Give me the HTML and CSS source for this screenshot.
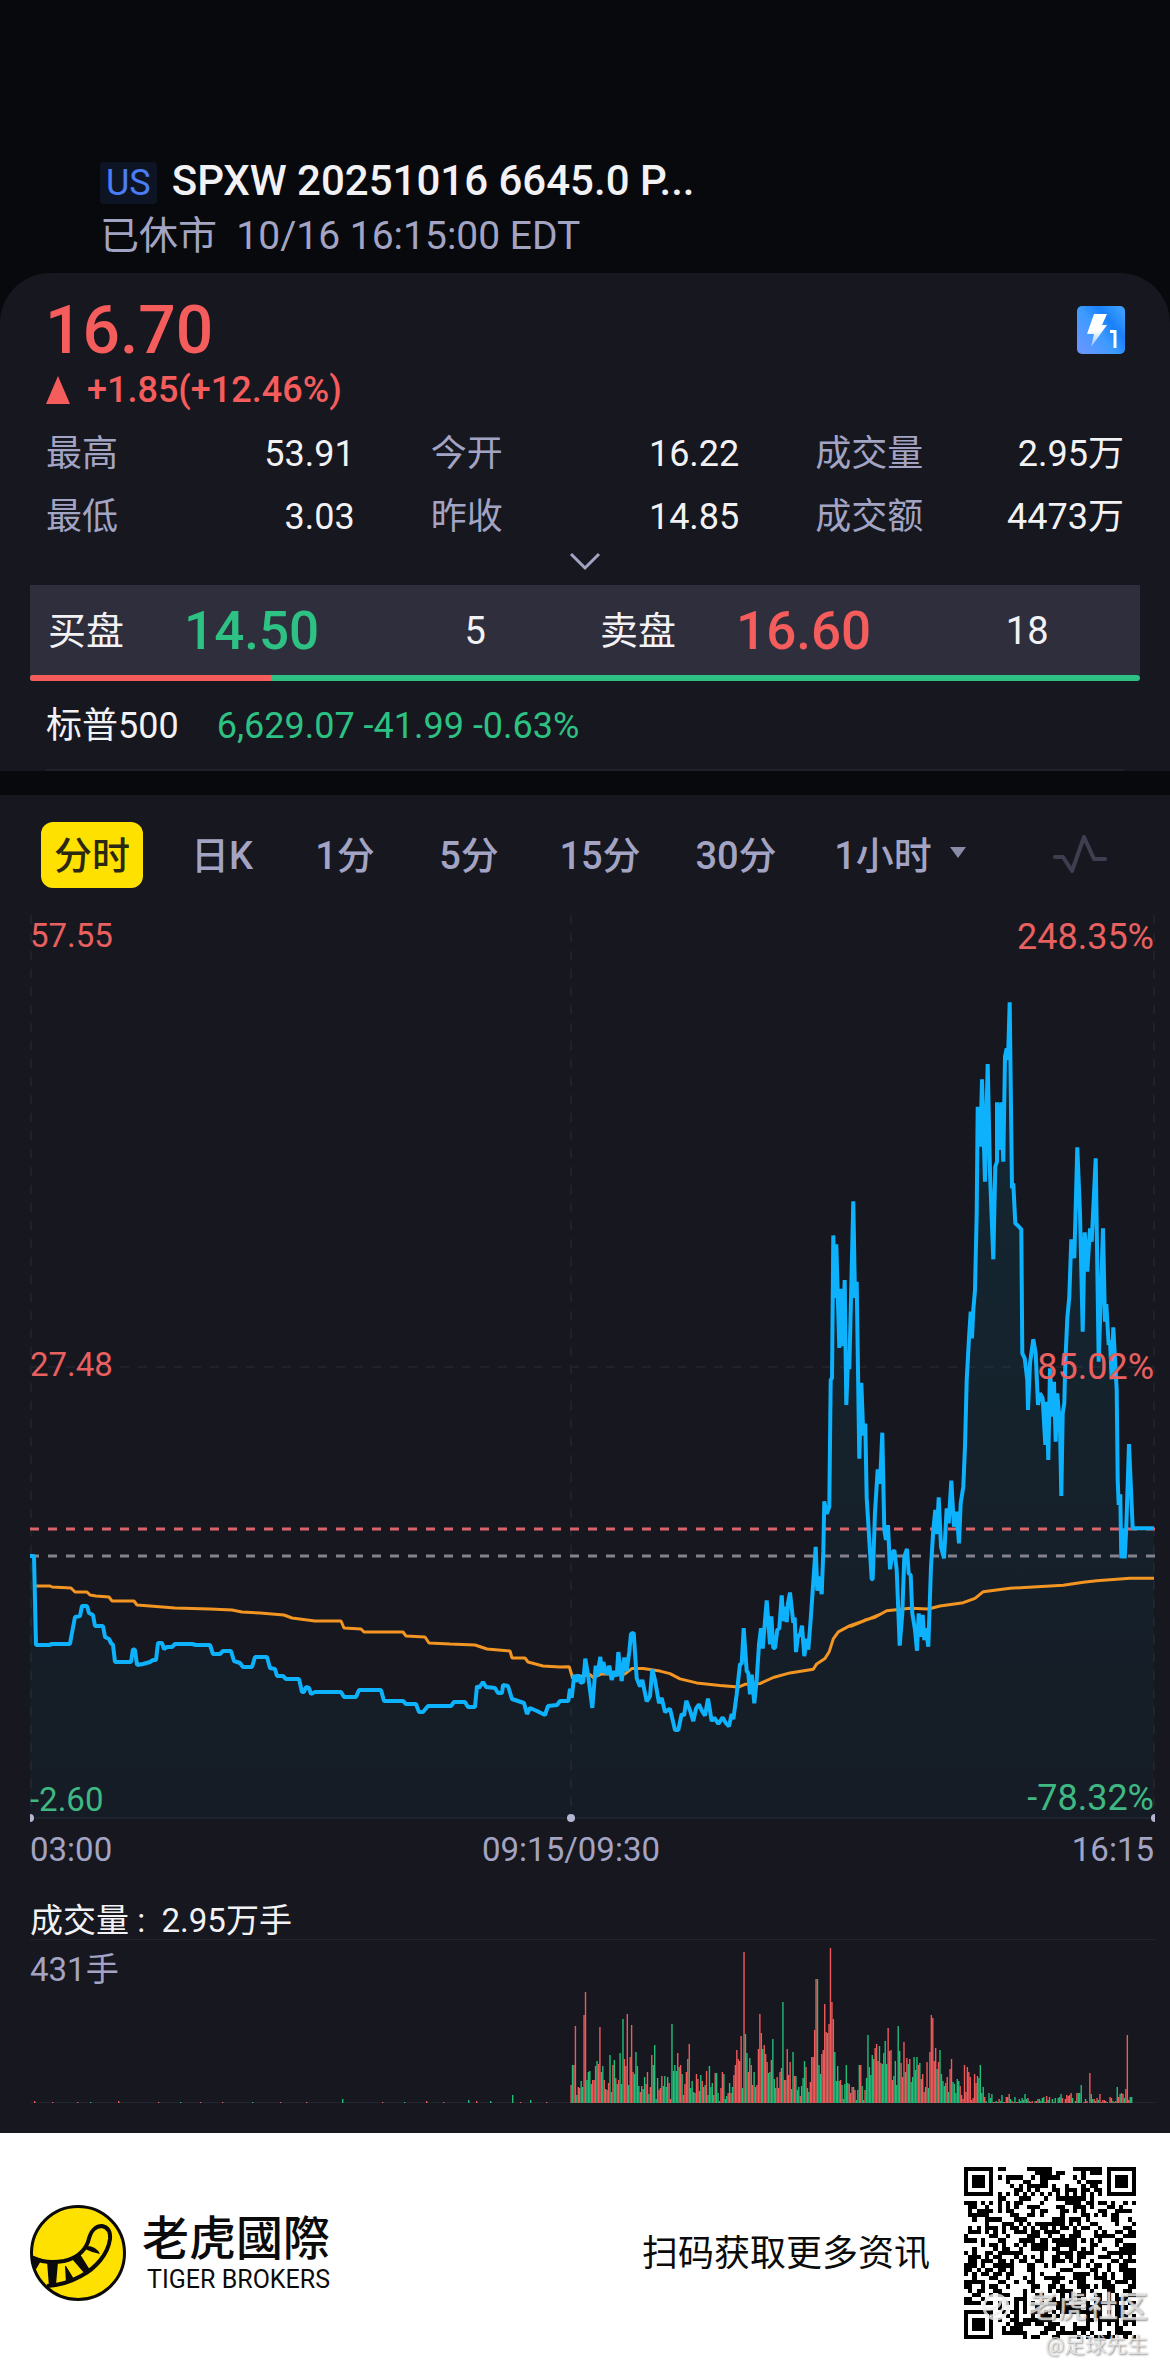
FILE: index.html
```html
<!DOCTYPE html>
<html lang="zh-CN">

<head>
    <meta charset="UTF-8">
    <meta name="viewport" content="width=device-width, initial-scale=1">
    <title>SPXW 20251016 6645.0</title>
    <link rel="stylesheet" href="styles.css">
</head>

<body>
    <header class="header">
        <div class="title-row">
            <span class="market">US</span>
            <h1>SPXW 20251016 6645.0 P...</h1>
        </div>
        <p class="status">已休市&nbsp; 10/16 16:15:00 EDT</p>
    </header>

    <main>
        <section class="quote">
            <div class="price-row">
                <strong class="price">16.70</strong>
                <svg class="level-icon" viewBox="0 0 48 48" role="img" aria-label="L1">
                    <defs>
                        <linearGradient id="level-bg" x1="0" y1="1" x2="1" y2="0.2">
                            <stop offset="0" stop-color="#6f95ff" />
                            <stop offset="0.5" stop-color="#3d9bff" />
                            <stop offset="0.75" stop-color="#1a80fa" />
                            <stop offset="1" stop-color="#3a9dff" />
                        </linearGradient>
                        <linearGradient id="bolt" x1="0" y1="0" x2="0" y2="1">
                            <stop offset="0.5" stop-color="#fff" />
                            <stop offset="1" stop-color="#fff" stop-opacity="0.4" />
                        </linearGradient>
                    </defs>
                    <rect width="48" height="48" rx="5" fill="url(#level-bg)" />
                    <path d="M17 8H30L25 19H30L14 41L17 28H10Z" fill="url(#bolt)" />
                    <path d="M33 25.500H38V42" fill="none" stroke="#fff" stroke-width="3" />
                </svg>
            </div>
            <p class="change"><span class="up-arrow"></span>+1.85(+12.46%)</p>

            <dl class="stats">
                <div><dt>最高</dt><dd>53.91</dd></div>
                <div><dt>今开</dt><dd>16.22</dd></div>
                <div><dt>成交量</dt><dd>2.95万</dd></div>
                <div><dt>最低</dt><dd>3.03</dd></div>
                <div><dt>昨收</dt><dd>14.85</dd></div>
                <div><dt>成交额</dt><dd>4473万</dd></div>
            </dl>
            <button class="expand" type="button" aria-label="展开">
                <svg viewBox="0 0 32 24" width="32" height="24">
                    <path d="M2 5L16 19L30 5" fill="none" stroke="#a3a4c3" stroke-width="3" />
                </svg>
            </button>

            <div class="book">
                <div class="side">
                    <span>买盘</span><strong class="green">14.50</strong><span class="size">5</span>
                </div>
                <div class="side">
                    <span>卖盘</span><strong class="red">16.60</strong><span class="size">18</span>
                </div>
            </div>
            <div class="ratio"><span class="ratio-bid"></span></div>

            <p class="index-row"><span>标普500</span><span class="green">6,629.07 -41.99 -0.63%</span></p>
        </section>

        <section class="chart">
            <nav class="tabs">
                <button type="button" class="active">分时</button>
                <button type="button">日K</button>
                <button type="button">1分</button>
                <button type="button">5分</button>
                <button type="button">15分</button>
                <button type="button">30分</button>
                <button type="button">1小时<span class="caret"></span></button>
                <button type="button" aria-label="指标">
                    <svg viewBox="0 0 54 40" width="54" height="40">
                        <path d="M2 24H10L19 38L31 4L41 26H52" fill="none" stroke="#3e3e50" stroke-width="4" stroke-linejoin="round" stroke-linecap="round" />
                    </svg>
                </button>
            </nav>

            <svg class="price-chart" viewBox="30 905 1125 975">
                <defs>
                    <linearGradient id="area" gradientUnits="userSpaceOnUse" x1="0" y1="1000" x2="0" y2="1818">
                        <stop offset="0" stop-color="#00b4dc" stop-opacity="0.11" />
                        <stop offset="1" stop-color="#00b4dc" stop-opacity="0.03" />
                    </linearGradient>
                </defs>
                <g class="grid">
                    <path d="M31 915V1818M571 915V1818M1154 915V1818M30 1367H1155" stroke-dasharray="9 9" />
                    <path d="M30 1818H1155" />
                </g>
                <path id="price-area" fill="url(#area)" />
                <path class="last-line" d="M30 1529H1155" />
                <path class="prev-line" d="M30 1556H1155" />
                <path id="avg-line" />
                <path id="price-line" />
                <g class="dots">
                    <circle cx="30" cy="1818" r="4" />
                    <circle cx="571" cy="1818" r="4" />
                    <circle cx="1155" cy="1818" r="4" />
                </g>
                <g class="axis">
                    <text class="up" x="30" y="947">57.55</text>
                    <text class="up" x="30" y="1376">27.48</text>
                    <text class="down" x="30" y="1811">-2.60</text>
                    <text class="up pct" x="1154" y="949">248.35%</text>
                    <text class="up pct" x="1154" y="1379">85.02%</text>
                    <text class="down pct" x="1154" y="1810">-78.32%</text>
                    <text x="30" y="1861">03:00</text>
                    <text class="mid" x="571" y="1861">09:15/09:30</text>
                    <text class="end" x="1154" y="1861">16:15</text>
                </g>
            </svg>

            <p class="volume-title">成交量 :&nbsp; 2.95万手</p>
            <svg class="volume-chart" viewBox="0 0 1125 164">
                <path class="volume-rule" d="M0 0.500H1125M0 163.500H1125" />
                <g id="volume-bars"></g>
                <text x="0" y="42">431手</text>
            </svg>
        </section>
    </main>

    <footer class="footer">
        <svg class="logo" viewBox="0 0 96 96" role="img" aria-label="Tiger Brokers">
            <circle cx="48" cy="48" r="46.500" fill="#ffe100" stroke="#0b0b0b" stroke-width="3" />
            <path d="M3 53Q16 59 34 56Q52 52 58 37C61 24 66 21 72 21Q81 23 80 34C78 49 66 63 51 71Q35 80 17 81" fill="none" stroke="#0b0b0b" stroke-width="4" />
            <path d="M1 50L12 54L5 66ZM17 56L28 57L26 80L19 82ZM35 61L36 61L44 74L36 78ZM42 54L50 49L60 65L55 69ZM55 44L57 41Q66 41 70 49Q63 48 55 44Z" fill="#0b0b0b" />
        </svg>
        <div class="brand">
            <b>老虎國際</b>
            <span>TIGER BROKERS</span>
        </div>
        <p class="scan">扫码获取更多资讯</p>
        <div class="qr">
            <svg viewBox="0 0 41 41" shape-rendering="crispEdges" role="img" aria-label="二维码">
                <path id="qr-modules" />
            </svg>
            <div class="watermark">
                <p class="community"><svg viewBox="0 0 28 28" width="28" height="28">
                        <circle cx="14" cy="14" r="12" fill="none" stroke="currentColor" stroke-width="3" />
                        <path d="M3 16Q16 18 19 8Q23 6 23 12Q19 22 8 23" fill="none" stroke="currentColor" stroke-width="3" />
                    </svg>老虎社区</p>
                <p>@足球先生</p>
            </div>
        </div>
    </footer>

    <script src="chart.js"></script>
</body>

</html>
```
FILE: styles.css
```css
* {
    box-sizing: border-box;
}

body {
    margin: 0;
    background-color: #08090c;
    color: #f2f2f5;
    font-family: Roboto, "Noto Sans CJK SC", sans-serif;
    font-size: 36px;
}

h1, p, dl, dd {
    margin: 0;
}

button {
    padding: 0;
    border: 0;
    background: none;
    color: inherit;
    font: inherit;
}

.green {
    color: #2dc183;
}

.red {
    color: #f55c5c;
}

/* header */
.header {
    padding: 150px 46px 11px 100px;
}

.title-row {
    display: flex;
    align-items: center;
    gap: 15px;
    height: 60px;
}

.title-row h1 {
    font-size: 42px;
    font-weight: 500;
    white-space: nowrap;
}

.market {
    padding: 0 6px;
    margin-top: 6px;
    border-radius: 4px;
    background-color: #0d1525;
    color: #4b7df5;
    line-height: 42px;
}

.status {
    color: #a3a4c3;
    font-size: 39px;
    line-height: 52px;
}

/* quote */
.quote {
    padding-top: 17px;
    border-radius: 50px 50px 0 0;
    background-color: #16171f;
}

.price-row {
    display: flex;
    align-items: center;
    justify-content: space-between;
    height: 80px;
    padding: 0 45px;
}

.price {
    color: #f55c5c;
    font-size: 66px;
    font-weight: 500;
}

.level-icon {
    width: 48px;
    height: 48px;
}

.change {
    display: flex;
    align-items: center;
    gap: 17px;
    padding: 0 46px;
    color: #f55c5c;
    font-weight: 500;
    line-height: 40px;
}

.up-arrow {
    border: 12px solid transparent;
    border-top: 0;
    border-bottom: 28px solid #f55c5c;
}

.stats {
    display: grid;
    grid-template-columns: repeat(3, 1fr);
    column-gap: 76px;
    padding: 13px 46px 0;
    line-height: 63px;
}

.stats div {
    display: flex;
    justify-content: space-between;
}

.stats dt {
    color: #a3a4c3;
}

.expand {
    display: block;
    width: 100%;
    height: 36px;
}

.expand svg {
    display: block;
    margin: 0 auto 12px;
}

.book {
    display: flex;
    margin: 0 30px;
    padding: 3px 6px 0 0;
    background-color: #2e2e3d;
    font-size: 38px;
    line-height: 87px;
}

.side {
    display: flex;
    flex: 1;
    padding-left: 18px;
}

.side strong {
    flex: 1;
    padding-left: 60px;
    font-size: 53px;
    font-weight: 500;
}

.side .size {
    width: 40%;
    text-align: center;
}

.ratio {
    height: 6px;
    margin: 0 30px;
    border-radius: 3px;
    overflow: hidden;
    background-color: #2dc183;
}

.ratio-bid {
    display: block;
    width: 21.740%;
    height: 100%;
    background-color: #f55c5c;
}

.index-row {
    display: flex;
    gap: 38px;
    margin: 0 46px;
    padding-top: 2px;
    border-bottom: 2px solid #202228;
    line-height: 86px;
}

/* chart */
.chart {
    margin-top: 24px;
    padding-bottom: 30px;
    background-color: #16171f;
}

.tabs {
    display: grid;
    grid-template-columns: 140fr 120fr 126fr 122fr 140fr 132fr 196fr 164fr;
    align-items: center;
    justify-items: center;
    height: 110px;
    padding: 10px 8px 0 22px;
}

.tabs button {
    display: flex;
    align-items: center;
    height: 66px;
    padding-bottom: 5px;
    color: #a3a4c3;
    font-size: 38px;
    font-weight: 500;
}

.tabs .active {
    padding: 0 13px 5px;
    border-radius: 12px;
    background-color: #ffe100;
    color: #2b2913;
}

.caret {
    margin-left: 18px;
    border: 8px solid transparent;
    border-top: 11px solid #8a8ba6;
    border-bottom: 0;
}

.price-chart, .volume-chart {
    display: block;
    width: calc(100% - 45px);
    margin-left: 30px;
}

.grid path {
    fill: none;
    stroke: #20212a;
    stroke-width: 2;
}

.last-line, .prev-line {
    stroke: #d9646c;
    stroke-width: 3;
    stroke-dasharray: 9 9;
}

.prev-line {
    stroke: #82838f;
}

#price-line, #avg-line {
    fill: none;
    stroke: #0eb2fc;
    stroke-width: 4;
    stroke-linejoin: bevel;
}

#avg-line {
    stroke: #f39523;
    stroke-width: 3;
}

.dots {
    fill: #b4b5d0;
}

.axis {
    fill: #a3a4c3;
    font-size: 33px;
}

.axis .up {
    fill: #e8605f;
}

.axis .down {
    fill: #3fb883;
}

.axis .pct {
    font-size: 36px;
}

.axis .pct, .axis .end {
    text-anchor: end;
}

.axis .mid {
    text-anchor: middle;
}

.volume-title {
    padding: 23px 30px 0;
    font-size: 33px;
    line-height: 36px;
}

.volume-rule {
    stroke: #23252c;
}

.volume-chart text {
    fill: #a3a4c3;
    font-size: 33px;
}

/* footer */
.footer {
    display: flex;
    align-items: center;
    height: 240px;
    padding: 0 34px 0 30px;
    background-color: #fff;
    color: #0b0b0b;
}

.logo {
    width: 96px;
    height: 96px;
}

.brand {
    display: flex;
    flex-direction: column;
    align-items: flex-end;
    margin-left: 16px;
}

.brand b {
    font-family: "Noto Sans CJK TC", sans-serif;
    font-size: 47px;
    font-weight: 500;
    line-height: 54px;
}

.brand span {
    font-size: 25px;
    line-height: 36px;
}

.scan {
    margin-left: auto;
    padding-bottom: 6px;
}

.qr {
    position: relative;
    width: 172px;
    height: 172px;
    margin-left: 34px;
}

.watermark {
    position: absolute;
    right: -12px;
    bottom: -20px;
    color: rgba(235, 235, 235, 0.8);
    font-size: 21px;
    line-height: 28px;
    text-align: right;
    text-shadow: 1px 1px 2px rgba(90, 90, 90, 0.7);
    white-space: nowrap;
}

.community {
    display: flex;
    align-items: center;
    gap: 18px;
    font-size: 30px;
    font-weight: 500;
    line-height: 48px;
}
```
FILE: chart.js
```js
// every block of points has its own origin and scale: [x0, y0, scaleX, scaleY, points]
const priceBlocks = [
    [0, 0, 1, 1, '30,1556 34,1556 36,1645 49,1645 52,1644 70,1644 71,1638 75,1617 80,1616 82,1606 87,1606 89,1613 93,1615 95,1626 103,1626 105,1637 109,1639 111,1643 113,1645 115,1662 131,1662 133,1649 135,1650 137,1665 143,1664 150,1662 153,1660 156,1660 158,1643 162,1643 164,1649 167,1647 172,1647 175,1644 192,1644 196,1645 210,1645 213,1654 220,1654 223,1651 231,1651 234,1661 240,1663 243,1667 252,1667 255,1657 267,1657 270,1668 275,1669 277,1676 283,1676 286,1679 299,1679 302,1692 304,1692 306,1687 309,1688 311,1694 315,1692 341,1692 344,1697 356,1697 359,1690 381,1690 384,1701 403,1701 406,1704 416,1704 419,1712 423,1712 428,1706 451,1706 454,1702 465,1702 468,1707 475,1707 477,1686 479,1688 481,1685 483,1682 486,1687 495,1688 498,1693 502,1693 503,1685 508,1686 512,1699 518,1701 524,1703 527,1714 530,1708 537,1711 545,1715 548,1706 557,1705 560,1701'],
    [560, 1180, 3, 2.8, '25,1459 30,1425 35,1450 43,1385 47,1405 55,1385 62,1408 70,1405 76,1340 85,1390 97,1478 107,1360 112,1390 121,1335 125,1380 130,1350 140,1385 148,1360 155,1400 163,1375 170,1390 175,1322 185,1403 193,1337 200,1375 208,1320 213,1270 221,1268 230,1395 240,1418 247,1400 260,1460 270,1445 277,1370 285,1400 297,1465 305,1450 315,1490 330,1480 345,1540 355,1540 365,1495 372,1500 379,1458 390,1485 400,1515 408,1480 417,1468 425,1485 435,1500 444,1452 455,1515 463,1505 475,1523 488,1505 497,1520 507,1530 515,1495 520,1510 530,1440 540,1355 545,1355 551,1255 560,1375 565,1380 570,1440 575,1385 583,1465 590,1400 597,1300 603,1255 608,1312 620,1177 630,1300 634,1222 640,1310 645,1310 652,1260 658,1255 665,1163 670,1235 675,1195 680,1238 684,1185 690,1155 700,1240 704,1225 708,1322 714,1275 720,1275 726,1248 733,1333 740,1285 745,1315 752,1230 767,1027 772,1150 778,1110 785,1160 790,1040 793,900 800,935 808,915 812,560 816,555 820,155 825,330 829,180 838,470 841,305 847,465 854,280 859,630 865,480 868,530 880,60 885,330 890,285 898,780 904,568 910,715 916,682 920,890 935,1118 938,1118 945,930 953,810 960,850'],
    [850, 1380, 3, 3, '97,158 103,450 108,480 114,435 120,568 127,520 133,510 140,570 149,797 157,700 163,530 171,507 176,580 182,585 187,700 195,750 201,812 206,700 211,770 218,705 223,780 228,745 235,800 243,560 250,450 256,390 261,462 266,352 273,500 282,535 290,385 296,430 304,302 312,440 320,395 327,490 332,370 340,320 345,200'],
    [850, 980, 3, 3, '350,1200 357,1075 362,995 366,1075 370,990 375,930 380,700 383,380 391,500 396,298 405,605 413,252 420,580 430,838 436,560 441,545 441,367 448,510 454,367 460,545 465,230 470,205 474,240 479,67 486,625 490,610 496,730 505,738 514,748 517,1120 524,1135 532,1200 534,1290 540,1150 550,1078 557,1120 564,1275 570,1240 578,1255 586,1395 590,1265 595,1440 600,1165 607,1310 612,1205 617,1385 622,1240 630,1340 634,1548 638,1300 643,1270 646,1150 652,1015 658,950 664,778 673,835 682,502 690,700 698,1055 704,757 712,875 720,745 725,785 737,535 746,1145 759,745 765,1025 769,972 776,1095 780,1080 785,1198 790,1042 800,1230 803,1500 806,1575 811,1543 814,1735 819,1645 824,1735 829,1640 837,1392 848,1645 912,1645']
];

const averageBlocks = [
    [0, 0, 1, 1, '36,1586 50,1586 52,1587 71,1588 75,1592 87,1592 90,1595 96,1596 109,1597 112,1601 134,1601 137,1605 150,1606 175,1608 210,1609 232,1610 242,1612 260,1613 284,1615 292,1618 315,1621 341,1621 344,1628 361,1629 364,1632 403,1632 406,1636 425,1637 429,1643 450,1644 475,1645 487,1649 510,1651 512,1658 525,1658 528,1662 543,1666 560,1667'],
    [560, 1180, 3, 2.8, '28,1363 38,1395 60,1390 90,1385 100,1393 125,1383 195,1383 215,1368 250,1368 300,1375 330,1382 360,1397 410,1408 480,1415 535,1420 555,1412 600,1410 640,1393 690,1380 760,1370 770,1355 795,1340 808,1320 820,1285 835,1265 870,1248 900,1238 940,1225 960,1216'],
    [850, 1380, 3, 3, '0,740 45,720 75,712 110,692 180,685 235,687 270,678 340,668 375,655 400,635 480,625 640,616 700,607 740,602 840,595 912,595']
];

function buildLine(blocks) {
    const points = [];
    blocks.forEach(([x0, y0, sx, sy, data]) => {
        data.split(' ').forEach((pair) => {
            const [x, y] = pair.split(',').map(Number);
            points.push((x0 + x / sx).toFixed(1) + ' ' + (y0 + y / sy).toFixed(1));
        });
    });
    return 'M' + points.join('L');
}

const priceLine = buildLine(priceBlocks);
document.getElementById('price-line').setAttribute('d', priceLine);
document.getElementById('price-area').setAttribute('d', priceLine + 'V1818H30Z');
document.getElementById('avg-line').setAttribute('d', buildLine(averageBlocks));

// volume per minute, positive = red, negative = green
const volumes = [
    18, -38, 38, 77, -8, 16, 15, -22, -16, 88, 111, -23, -31, -32, -19, 23, 23, 37, -42, 39, 76, 31, -37, 23, -14, 13, 20, -48, -11, 38,
    -43, 25, -19, 23, -50, -19, -84, 44, 37, 89, -18, 46, 78, 31, -29, -51, -37, -17, 11, 17, -14, -26, 19, 31, -9, 16, 48, -38, -58, -4,
    -25, 13, 15, 27, -17, -27, -16, -26, 20, 4, -79, -32, -38, -32, 50, -36, 38, -29, 8, 19, 31, -44, 59, -15, -22, 11, -10, 29, 24, 12,
    -28, 22, 16, -18, 32, -8, -37, -16, -20, 8, 30, -30, -10, -2, 15, 31, -29, -4, -7, 10, -20, 10, -16, 28, 38, 53, 44, 42, 67, -15,
    151, -69, -50, 31, -45, 38, 18, -31, -16, 18, 54, 89, 70, -54, 58, 49, 41, -30, -31, 43, -64, -24, -15, 26, 15, 31, 35, -101, 23, -23,
    54, 28, 41, -14, -51, 27, -27, -13, -16, 7, -17, -25, -42, 36, -15, -11, 21, 46, 46, 73, 124, -124, -38, -29, 49, 53, 99, 71, -70, 79,
    155, 101, 84, -51, -22, -37, -22, 23, -18, 4, -19, -38, -20, 19, 10, 16, -16, 13, -3, -13, -38, 38, -17, -3, 13, -25, -68, -36, -28, -48,
    44, 55, 59, 42, -57, 40, -39, -50, -62, -39, 75, 52, 53, 23, -27, -42, -18, -77, -52, 40, 26, 61, -31, 45, -39, 44, -21, -26, -46, -33,
    -46, 38, -40, 24, 29, 11, -16, 41, -15, 51, 88, 85, 42, 55, -34, 41, -53, -29, -22, -17, 20, 26, -11, 34, 44, -21, -19, -10, -24, -22,
    17, 8, 4, 38, 11, 36, 31, 26, 3, 5, 29, 20, 27, -25, -38, -10, -16, 6, -2, 0, -10, -5, -9, 1, 1, -2, 1, 4, -2, -8,
    -1, 1, 6, -6, 9, -4, 2, 1, -6, 1, -1, -4, -2, -5, 3, -9, -4, 5, -2, 1, 2, 0, -2, 2, -4, 4, -2, -5, -6, 1,
    7, -3, 6, 0, -4, 1, -5, 0, -5, -6, -9, 5, 0, 4, 8, 7, 8, 10, -5, 0, -2, 10, -10, -10, -18, 0, 1, -4, 2, 0,
    30, -9, -4, 4, 2, 5, -3, 9, 1, 3, 3, 2, -1, 0, 6, 5, -2, 1, 2, -16, 6, -9, 10, 9, -5, 14, 68, 3, -6, -6
];

// pre-market trades, [x, height]
const preMarket = [[4, 2], [22, 1], [47, 1], [60, -1], [88, 2], [128, 1], [150, -1], [170, 1], [192, 1], [222, -1], [250, 1], [276, 1], [312, -4], [352, 1], [374, -1], [396, 2], [413, 1], [438, -3], [446, 2], [460, -2], [482, -8], [490, 1], [500, -3], [516, 1]];

const bars = document.getElementById('volume-bars');

function addBar(x, value) {
    const height = Math.abs(value);
    const rect = document.createElementNS('http://www.w3.org/2000/svg', 'rect');
    rect.setAttribute('x', x);
    rect.setAttribute('y', 164 - height);
    rect.setAttribute('width', 1.4);
    rect.setAttribute('height', height);
    rect.setAttribute('fill', value > 0 ? '#f0595a' : '#22bd79');
    bars.appendChild(rect);
}

preMarket.forEach(([x, value]) => addBar(x, value));
const step = 562 / volumes.length;
volumes.forEach((value, i) => addBar((540.4 + i * step).toFixed(2), value));

// qr code modules
const size = 41;
let seed = 1016;
let modules = '';

function random() {
    seed = (seed * 1103515245 + 12345) % 2147483648;
    return seed / 2147483648;
}

function finder(x, y) {
    const ring = Math.max(Math.abs(x - 3), Math.abs(y - 3));
    return ring !== 2 && ring !== 4;
}

for (let y = 0; y < size; y++) {
    for (let x = 0; x < size; x++) {
        let dark = random() > 0.49;
        if (x < 8 && y < 8) dark = finder(x, y);
        else if (x > 32 && y < 8) dark = finder(x - 34, y);
        else if (x < 8 && y > 32) dark = finder(x, y - 34);
        else if (Math.abs(x - 34) < 3 && Math.abs(y - 34) < 3) dark = Math.max(Math.abs(x - 34), Math.abs(y - 34)) !== 1;
        else if (x === 6) dark = y % 2 === 0;
        else if (y === 6) dark = x % 2 === 0;
        if (dark) modules += `M${x} ${y}h1v1h-1z`;
    }
}
document.getElementById('qr-modules').setAttribute('d', modules);
```
